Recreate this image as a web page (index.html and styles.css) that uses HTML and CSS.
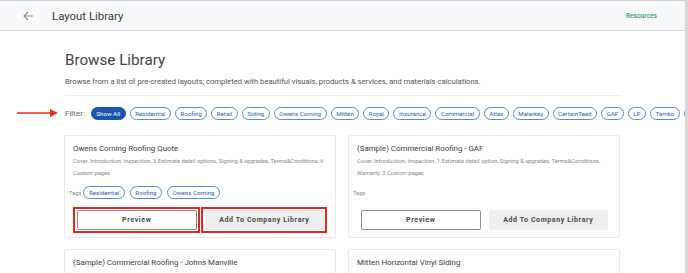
FILE: index.html
```html
<!DOCTYPE html>
<html lang="en">
<head>
    <meta charset="UTF-8">
    <meta name="viewport" content="width=device-width, initial-scale=1.0">
    <title>Layout Library</title>
    <link rel="stylesheet" href="styles.css">
</head>
<body>
<div class="app">

<header class="topbar">
    <div class="topbar-left">
        <svg class="back" width="11" height="10" viewBox="0 0 11 10">
            <path d="M10 5H1.5M5 1L1 5l4 4" fill="none" stroke="#8a8f96" stroke-width="1.1"/>
        </svg>
        <h1>Layout Library</h1>
    </div>
    <a href="#" class="resources">Resources</a>
</header>

<main class="library">
    <h2>Browse Library</h2>
    <p class="intro">Browse from a list of pre-created layouts; completed with beautiful visuals, products &amp; services, and materials calculations.</p>

    <div class="filter">
        <!-- annotation arrow -->
        <svg class="note-arrow" width="42" height="10" viewBox="0 0 42 10">
            <path d="M0 5h34" stroke="#e2301f" stroke-width="1.6"/>
            <path d="M33 1l8 4-8 4z" fill="#e2301f"/>
        </svg>
        <span class="filter-label">Filter:</span>
        <span class="chip active">Show All</span>
        <span class="chip">Residential</span>
        <span class="chip">Roofing</span>
        <span class="chip">Retail</span>
        <span class="chip">Siding</span>
        <span class="chip">Owens Corning</span>
        <span class="chip">Mitten</span>
        <span class="chip">Royal</span>
        <span class="chip">Insurance</span>
        <span class="chip">Commercial</span>
        <span class="chip">Atlas</span>
        <span class="chip">Malarkey</span>
        <span class="chip">CertainTeed</span>
        <span class="chip">GAF</span>
        <span class="chip">LP</span>
        <span class="chip">Tamko</span>
        <span class="chip">James Hardie</span>
    </div>

    <div class="cards">
        <div class="card">
            <h3>Owens Corning Roofing Quote</h3>
            <p class="desc">Cover, Introduction, Inspection, 3 Estimate detail options, Signing &amp; upgrades, Terms&amp;Conditions, 6 Custom pages</p>
            <div class="tags">
                <span class="tags-label">Tags</span>
                <span class="chip">Residential</span>
                <span class="chip">Roofing</span>
                <span class="chip">Owens Corning</span>
            </div>
            <div class="actions">
                <div class="mark red"><button class="btn btn-outline">Preview</button></div>
                <div class="mark red"><button class="btn btn-grey">Add To Company Library</button></div>
            </div>
        </div>

        <div class="card">
            <h3>(Sample) Commercial Roofing - GAF</h3>
            <p class="desc">Cover, Introduction, Inspection, 1 Estimate detail option, Signing &amp; upgrades, Terms&amp;Conditions, Warranty, 3 Custom pages</p>
            <div class="tags">
                <span class="tags-label">Tags</span>
            </div>
            <div class="actions">
                <div class="mark"><button class="btn btn-outline">Preview</button></div>
                <div class="mark"><button class="btn btn-grey">Add To Company Library</button></div>
            </div>
        </div>

        <div class="card">
            <h3>(Sample) Commercial Roofing - Johns Manville</h3>
        </div>

        <div class="card">
            <h3>Mitten Horizontal Vinyl Siding</h3>
        </div>
    </div>
</main>

</div>
</body>
</html>
```

FILE: styles.css
```css
body {
    margin: 0;
    font-family: Roboto, 'Liberation Sans', sans-serif;
    background: #fff;
    overflow: hidden;
}

.app {
    width: 685px;
    height: 273px;
    border-right: 3px solid #d6d6d6;
    overflow: hidden;
}

.topbar {
    box-sizing: border-box;
    height: 31px;
    background: #f7f8fa;
    border-top: 1px solid #cfd1d4;
    border-bottom: 1px solid #d8d8d8;
    display: flex;
    align-items: center;
    justify-content: space-between;
    padding: 0 28px 0 23px;
}

.topbar-left {
    display: flex;
    align-items: center;
}

.back {
    margin-right: 18px;
}

.topbar h1 {
    margin: 0;
    font-size: 11.4px;
    font-weight: 400;
    color: #3b3b3b;
}

.resources {
    font-size: 6.6px;
    color: #3a9d72;
    text-decoration: none;
    font-weight: 500;
}

.library {
    padding: 17px 0 0 65px;
    width: 556px;
}

.library h2 {
    margin: 0;
    font-size: 15.2px;
    line-height: 24px;
    font-weight: 400;
    color: #424548;
}

.intro {
    margin: 4px 0 0;
    padding-bottom: 7px;
    border-bottom: 1px solid #eeeeee;
    font-size: 7.65px;
    line-height: 12px;
    color: #555;
}

.filter {
    position: relative;
    margin-top: 11px;
    display: flex;
    align-items: center;
    gap: 4px;
    white-space: nowrap;
    width: 700px;
}

.note-arrow {
    position: absolute;
    left: -48px;
    top: 1px;
}

.filter-label {
    font-size: 8px;
    color: #666;
    margin-right: 2px;
}

.chip {
    box-sizing: border-box;
    display: inline-flex;
    align-items: center;
    height: 13px;
    padding: 0 4.5px;
    border: 1px solid #5a8ad4;
    border-radius: 7px;
    font-size: 6.2px;
    color: #2f62b5;
    background: #fff;
}

.chip.active {
    background: #1b55ae;
    border-color: #1b55ae;
    color: #fff;
}

.cards {
    margin-top: 15px;
    display: grid;
    grid-template-columns: 272px 272px;
    column-gap: 12px;
    row-gap: 11px;
    margin-left: -1px;
}

.card {
    box-sizing: border-box;
    border: 1px solid #e9e9e9;
    border-radius: 2px;
    padding: 7px 8px 4px;
    min-height: 40px;
}

.card h3 {
    margin: 0;
    font-size: 7.9px;
    line-height: 12px;
    font-weight: 400;
    color: #3c3c3c;
}

.desc {
    margin: 1px 0 0;
    font-size: 5.75px;
    line-height: 11.5px;
    color: #8a8a8a;
}

.tags {
    margin-top: 7px;
    display: flex;
    align-items: center;
    gap: 5px;
    height: 13px;
    margin-left: -4px;
}

.tags-label {
    font-size: 5.75px;
    color: #8a8a8a;
    margin-right: -3px;
}

.actions {
    margin-top: 8px;
    display: grid;
    grid-template-columns: 1fr 1fr;
    gap: 1px;
}

.mark {
    border: 2px solid transparent;
    padding: 1px 1px 1px 2px;
}

.mark.red {
    border-color: #e8271c;
}

.btn {
    display: block;
    width: 100%;
    height: 20px;
    font-family: Roboto, 'Liberation Sans', sans-serif;
    font-size: 7px;
    font-weight: 700;
    letter-spacing: 0.6px;
    color: #4a4a4a;
    border-radius: 2px;
}

.btn-outline {
    background: #fff;
    border: 1px solid #8c8c8c;
}

.btn-grey {
    background: #eeeeee;
    border: 1px solid #eeeeee;
}
```
